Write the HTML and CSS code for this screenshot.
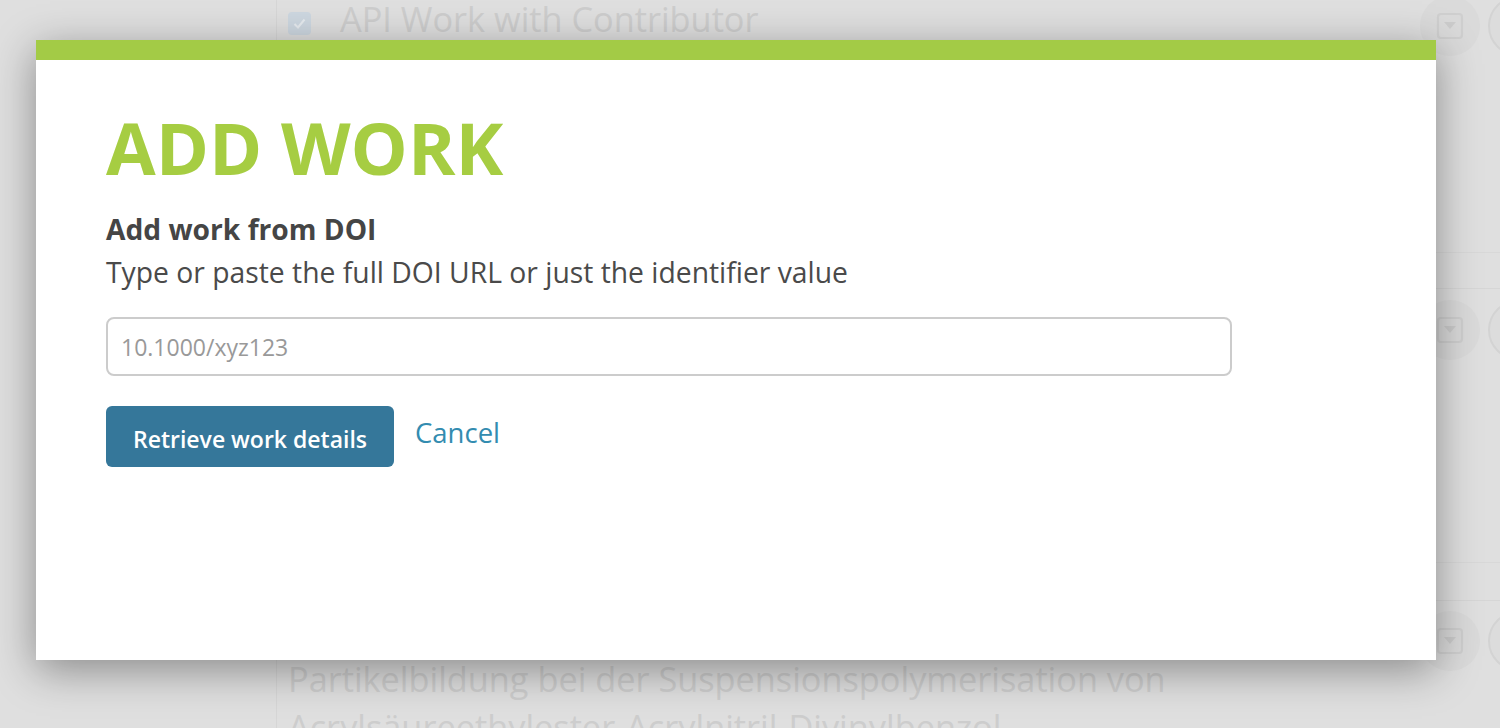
FILE: index.html
```html
<!DOCTYPE html>
<html>
<head>
<meta charset="utf-8">
<link rel="stylesheet" href="styles.css">
</head>
<body>
<div class="page">
  <div class="sidebar"></div>
  <div class="main">
    <div class="row row1">
      <div class="row-body">
        <div class="title-line">
          <span class="check"><svg width="23" height="23" viewBox="0 0 23 23"><rect x="0" y="0" width="23" height="23" rx="4" fill="#cdd7e0"/><path d="M6.5 12 L10 15.5 L16.5 7.5" fill="none" stroke="#e6ebef" stroke-width="2"/></svg></span>
          <span class="work-title">API Work with Contributor</span>
        </div>
      </div>
      <div class="actions">
        <span class="circ"><svg width="28" height="28" viewBox="0 0 28 28"><rect x="2" y="2" width="24" height="24" rx="3" fill="none" stroke="#cfcfcf" stroke-width="2.2"/><path d="M8 10 H20 L14 17 Z" fill="#cccccc"/></svg></span>
        <span class="circ half"></span>
      </div>
    </div>
    <div class="row row2">
      <div class="row-body"></div>
      <div class="actions">
        <span class="circ"><svg width="28" height="28" viewBox="0 0 28 28"><rect x="2" y="2" width="24" height="24" rx="3" fill="none" stroke="#cfcfcf" stroke-width="2.2"/><path d="M8 10 H20 L14 17 Z" fill="#cccccc"/></svg></span>
        <span class="circ half"></span>
      </div>
    </div>
    <div class="row row3">
      <div class="row-body">
        <div class="long-title">Partikelbildung bei der Suspensionspolymerisation von Acrylsäureethylester-Acrylnitril-Divinylbenzol</div>
      </div>
      <div class="actions">
        <span class="circ"><svg width="28" height="28" viewBox="0 0 28 28"><rect x="2" y="2" width="24" height="24" rx="3" fill="none" stroke="#cfcfcf" stroke-width="2.2"/><path d="M8 10 H20 L14 17 Z" fill="#cccccc"/></svg></span>
        <span class="circ half"></span>
      </div>
    </div>
  </div>
</div>

<div class="modal">
  <div class="modal-bar"></div>
  <div class="modal-body">
    <h1 class="modal-title">ADD WORK</h1>
    <div class="label">Add work from DOI</div>
    <div class="help">Type or paste the full DOI URL or just the identifier value</div>
    <input class="doi-input" type="text" placeholder="10.1000/xyz123">
    <div class="buttons">
      <button class="btn-primary">Retrieve work details</button>
      <a class="cancel" href="#">Cancel</a>
    </div>
  </div>
</div>
</body>
</html>
```

FILE: styles.css
```css
* { box-sizing: border-box; }
html, body {
  margin: 0;
  padding: 0;
}
body {
  width: 1500px;
  height: 728px;
  overflow: hidden;
  background: #dfdfdf;
  font-family: "Open Sans", "Noto Sans", sans-serif;
  position: relative;
}
.page {
  display: flex;
  height: 728px;
}
.sidebar {
  width: 276px;
  flex: none;
}
.main {
  flex: 1;
  border-left: 1px solid #d6d6d6;
  display: flex;
  flex-direction: column;
}
.row {
  display: flex;
  flex: none;
}
.row1 {
  height: 263px;
  margin-top: -10px;
  border-bottom: 1px solid #d8d8d8;
}
.row2 {
  height: 275px;
  margin-top: 35px;
  border-top: 1px solid #d6d6d6;
  border-bottom: 1px solid #d8d8d8;
}
.row3 {
  height: 200px;
  margin-top: 37px;
  border-top: 1px solid #d6d6d6;
}
.row-body {
  flex: 1;
  padding-left: 11px;
}
.title-line {
  display: flex;
  align-items: flex-start;
  padding-top: 5px;
}
.check {
  width: 23px;
  height: 23px;
  margin-top: 17px;
  margin-right: 29px;
  display: flex;
}
.work-title {
  font-size: 34.3px;
  line-height: 48px;
  color: #cdcdcd;
}
.long-title {
  font-size: 34.3px;
  line-height: 48px;
  color: #cdcdcd;
  padding-top: 54px;
  width: 900px;
}
.actions {
  display: flex;
  gap: 8px;
  width: 80px;
}
.row1 .actions { padding-top: 6px; }
.row2 .actions { padding-top: 11px; }
.row3 .actions { padding-top: 10px; }
.circ {
  width: 60px;
  height: 60px;
  border-radius: 50%;
  background: #dadada;
  flex: none;
  display: flex;
  align-items: center;
  justify-content: center;
}
.circ.half {
  background: #dcdcdc;
  border: 2px solid #d3d3d3;
}

.modal {
  position: absolute;
  left: 36px;
  top: 40px;
  width: 1400px;
  height: 620px;
  background: #ffffff;
  box-shadow: 0 10px 40px rgba(0, 0, 0, 0.38);
}
.modal-bar {
  height: 20px;
  background: #a3cb46;
}
.modal-body {
  padding: 51px 70px 0 70px;
}
.modal-title {
  margin: 0;
  font-size: 72px;
  font-weight: 700;
  line-height: 72px;
  color: #a6cd42;
}
.label {
  margin-top: 26px;
  font-size: 28.2px;
  font-weight: 700;
  line-height: 40px;
  color: #454545;
}
.help {
  margin-top: 3px;
  font-size: 28.3px;
  line-height: 40px;
  color: #4a4a4a;
}
.doi-input {
  display: block;
  margin-top: 25px;
  width: 1126px;
  height: 59px;
  border: 2px solid #cccccc;
  border-radius: 8px;
  padding: 0 13px;
  font-family: "Open Sans", "Noto Sans", sans-serif;
  font-size: 23px;
  color: #555;
  outline: none;
}
.doi-input::placeholder {
  color: #999999;
}
.buttons {
  display: flex;
  align-items: center;
  margin-top: 30px;
  gap: 21px;
}
.btn-primary {
  height: 61px;
  width: 288px;
  border: none;
  border-radius: 6px;
  background: #35779a;
  color: #ffffff;
  font-family: "Open Sans", "Noto Sans", sans-serif;
  font-size: 23px;
  font-weight: 600;
  padding: 4px 0 0 0;
  cursor: pointer;
}
.cancel {
  font-size: 27.5px;
  color: #338cb0;
  text-decoration: none;
  margin-top: -8px;
}
```
